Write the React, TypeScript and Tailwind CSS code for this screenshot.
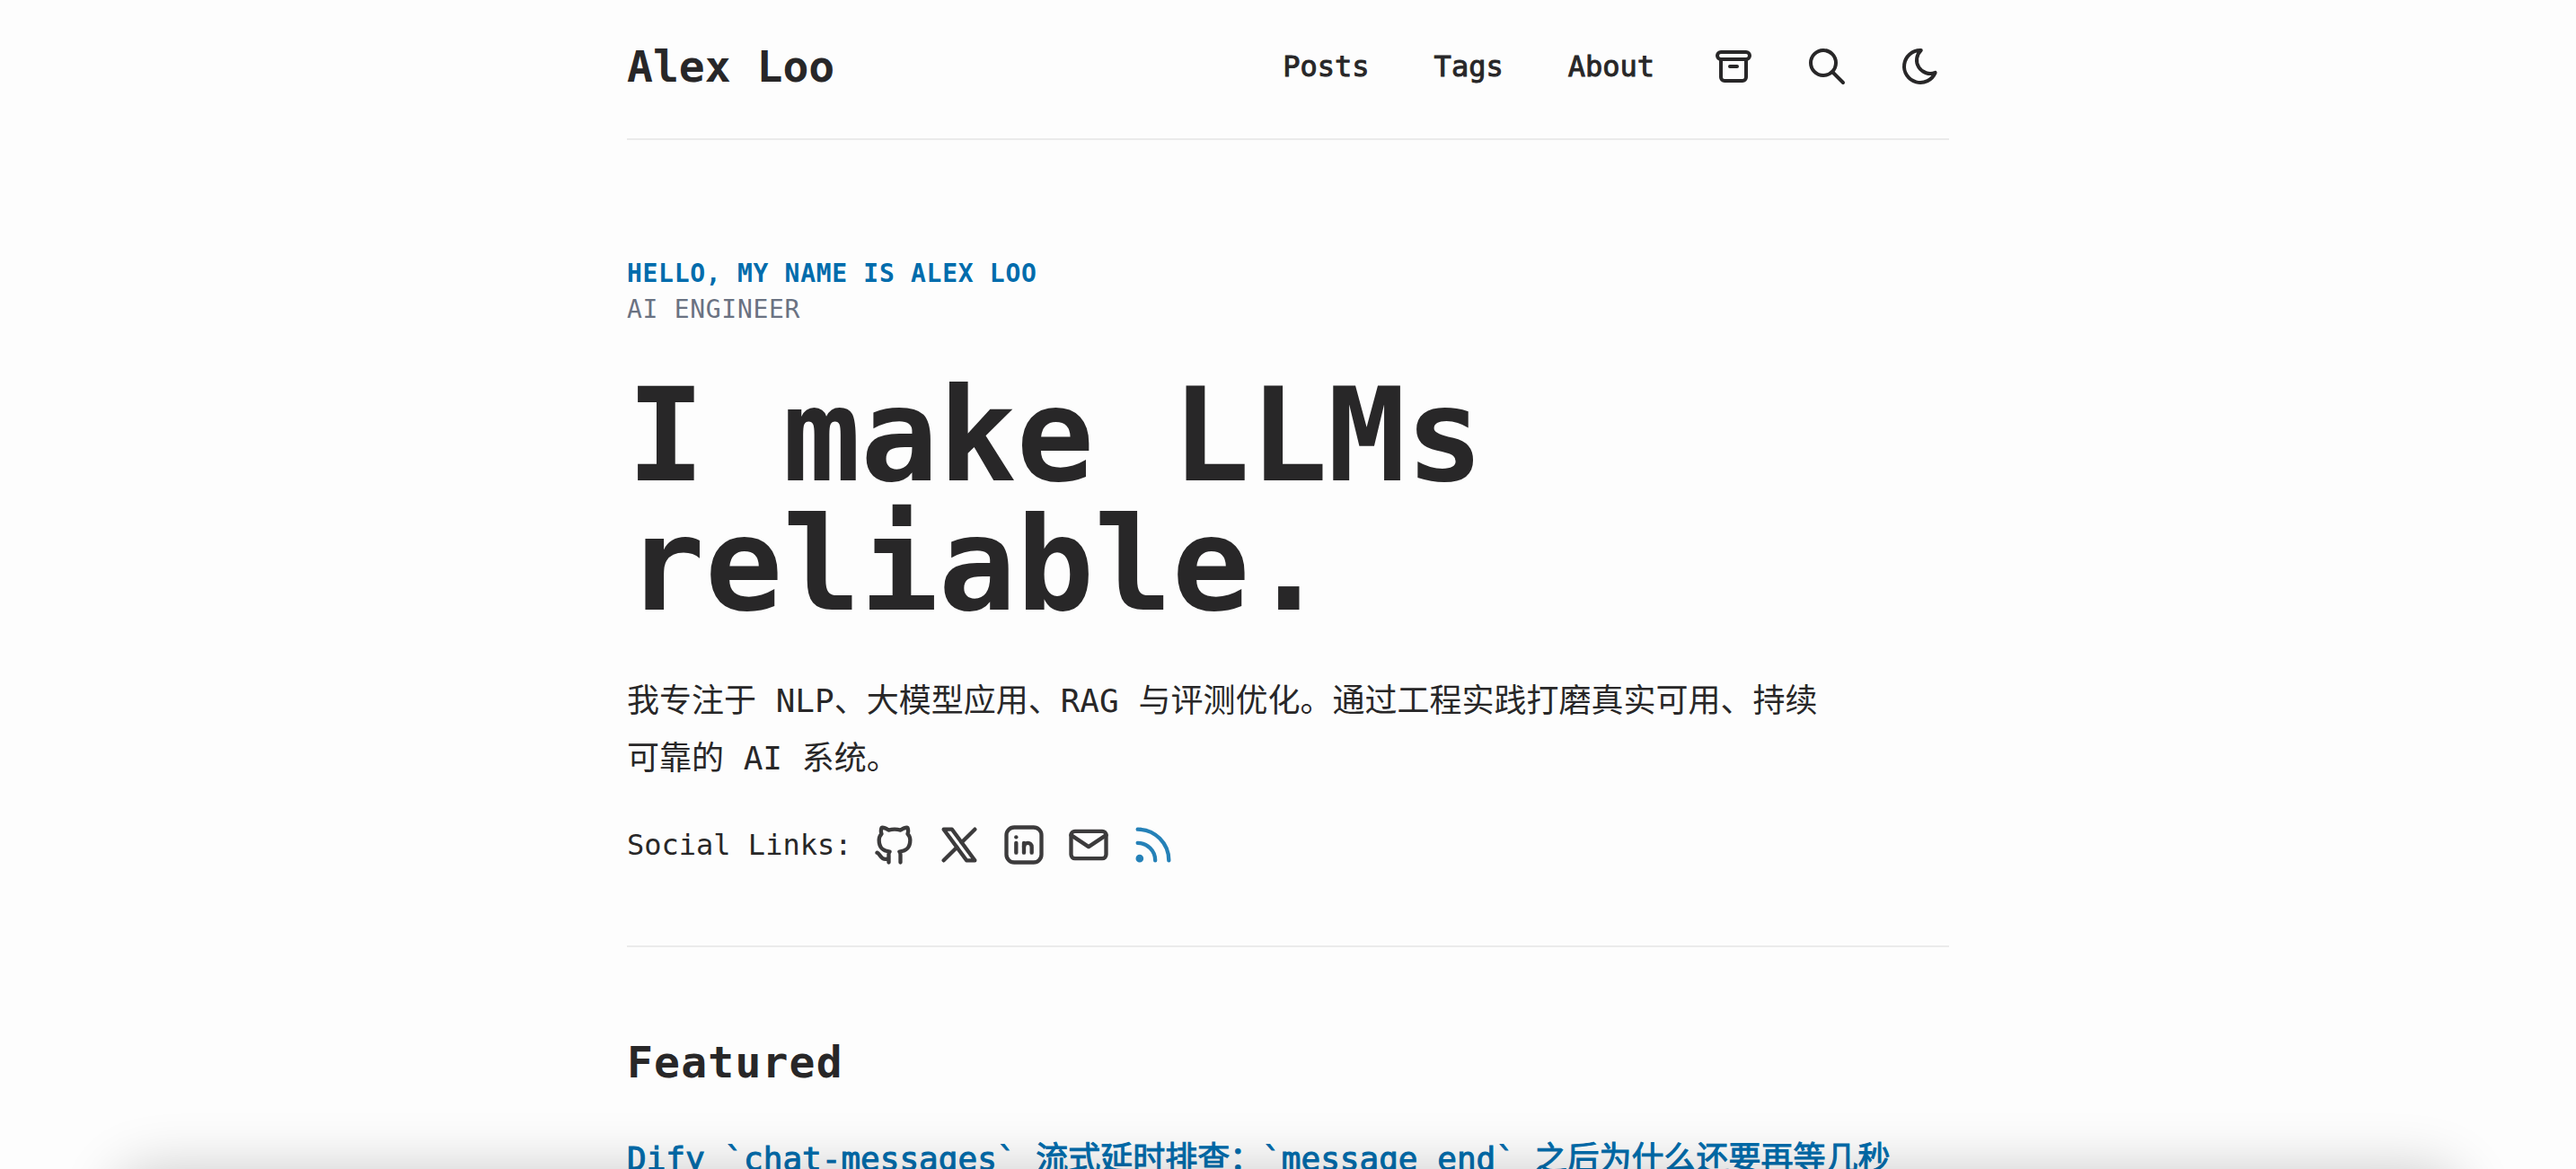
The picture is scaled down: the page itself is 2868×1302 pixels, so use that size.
import React from "react";
import {
  TbArchive,
  TbBrandGithub,
  TbBrandLinkedin,
  TbBrandX,
  TbMail,
  TbMoon,
  TbRss,
  TbSearch,
} from "react-icons/tb";

const navLinks = [
  { label: "Posts", href: "#posts" },
  { label: "Tags", href: "#tags" },
  { label: "About", href: "#about" },
];

const socials = [
  { label: "GitHub", href: "#github", icon: TbBrandGithub },
  { label: "X", href: "#x", icon: TbBrandX },
  { label: "LinkedIn", href: "#linkedin", icon: TbBrandLinkedin },
  { label: "Mail", href: "#mail", icon: TbMail },
];

const Header: React.FC = () => {
  return (
    <header className="flex items-center justify-between pt-[42px] pb-12 border-b-2 border-[#ebebeb]">
      <a href="#home" className="text-5xl leading-16 font-bold">
        Alex Loo
      </a>
      <nav className="flex items-center gap-14 pr-2">
        {navLinks.map((link) => (
          <a
            key={link.label}
            href={link.href}
            className="px-2 text-[32px] leading-12 [-webkit-text-stroke:1px_currentColor]"
          >
            {link.label}
          </a>
        ))}
        <a href="#archives" aria-label="Archives">
          <TbArchive className="size-12" />
        </a>
        <a href="#search" aria-label="Search">
          <TbSearch className="size-12" />
        </a>
        <button type="button" aria-label="Toggle theme" className="cursor-pointer">
          <TbMoon className="size-12" />
        </button>
      </nav>
    </header>
  );
};

const Hero: React.FC = () => {
  return (
    <section className="pt-[129px] pb-[86px] border-b-2 border-[#ebebeb]">
      <p className="text-[28px] leading-10 font-bold uppercase tracking-wide text-[#006cac]">
        Hello, my name is Alex Loo
      </p>
      <p className="text-[28px] leading-10 uppercase tracking-wide text-gray-500">AI Engineer</p>
      <h1 className="mt-12 text-[144px] leading-none font-bold">I make LLMs reliable.</h1>
      <p className="mt-12 max-w-[1344px] text-4xl leading-16">
        我专注于 NLP、大模型应用、RAG 与评测优化。通过工程实践打磨真实可用、持续可靠的 AI 系统。
      </p>
      <div className="mt-[38px] flex items-center gap-5">
        <span className="pr-0.5 text-[32px] leading-12">Social Links:</span>
        {socials.map(({ label, href, icon: Icon }) => (
          <a key={label} href={href} aria-label={label} className="opacity-90">
            <Icon className="size-[52px]" />
          </a>
        ))}
        <a href="#rss" aria-label="RSS" className="text-[#006cac] opacity-85">
          <TbRss className="size-[52px]" />
        </a>
      </div>
    </section>
  );
};

const Featured: React.FC = () => {
  return (
    <section className="pt-24">
      <h2 className="text-5xl leading-16 font-bold tracking-wide">Featured</h2>
      <ul className="mt-11">
        <li>
          <a
            href="#dify"
            className="block text-4xl leading-16 text-[#006cac] [-webkit-text-stroke:1px_currentColor]"
          >
            Dify `chat-messages` 流式延时排查：`message_end` 之后为什么还要再等几秒
          </a>
        </li>
      </ul>
    </section>
  );
};

export default function App() {
  return (
    <div
      lang="zh-CN"
      className="relative h-screen overflow-hidden bg-[#fdfdfd] text-[#282728] font-['DejaVu_Sans_Mono','Noto_Sans_CJK_SC',monospace]"
    >
      <div className="mx-auto max-w-[1536px] px-8">
        <Header />
        <main>
          <Hero />
          <Featured />
        </main>
      </div>
      {/* soft shade rising from the bottom edge */}
      <div className="pointer-events-none absolute inset-x-32 top-full h-40 rounded-[40px] shadow-[0_0_64px_rgba(0,0,0,0.2)]" />
    </div>
  );
}
